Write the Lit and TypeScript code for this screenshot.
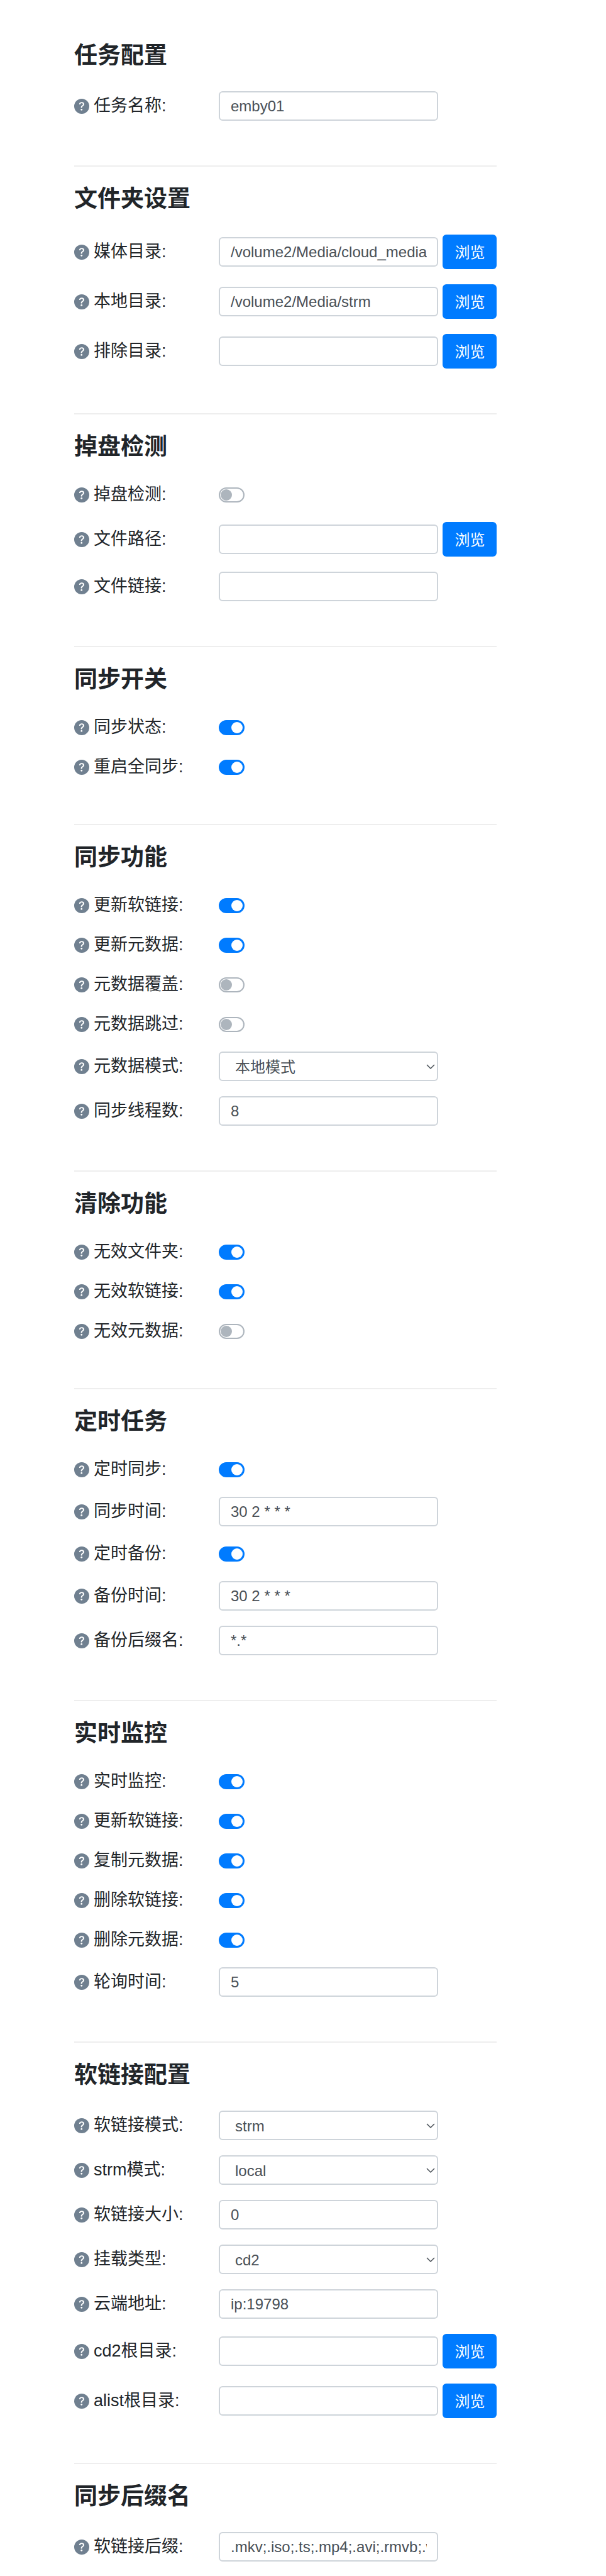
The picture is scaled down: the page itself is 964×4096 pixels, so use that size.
import { LitElement, html, css, nothing } from "lit";
import { customElement, property } from "lit/decorators.js";

type Field = {
  label: string;
  kind: "text" | "browse" | "switch" | "select";
  value?: string;
  on?: boolean;
};

type Section = { title: string; fields: Field[] };

const text = (label: string, value = ""): Field => ({ label, kind: "text", value });
const browse = (label: string, value = ""): Field => ({ label, kind: "browse", value });
const toggle = (label: string, on: boolean): Field => ({ label, kind: "switch", on });
const choice = (label: string, value: string): Field => ({ label, kind: "select", value });

const SECTIONS: Section[] = [
  { title: "任务配置", fields: [text("任务名称", "emby01")] },
  {
    title: "文件夹设置",
    fields: [
      browse("媒体目录", "/volume2/Media/cloud_media"),
      browse("本地目录", "/volume2/Media/strm"),
      browse("排除目录"),
    ],
  },
  {
    title: "掉盘检测",
    fields: [toggle("掉盘检测", false), browse("文件路径"), text("文件链接")],
  },
  {
    title: "同步开关",
    fields: [toggle("同步状态", true), toggle("重启全同步", true)],
  },
  {
    title: "同步功能",
    fields: [
      toggle("更新软链接", true),
      toggle("更新元数据", true),
      toggle("元数据覆盖", false),
      toggle("元数据跳过", false),
      choice("元数据模式", "本地模式"),
      text("同步线程数", "8"),
    ],
  },
  {
    title: "清除功能",
    fields: [
      toggle("无效文件夹", true),
      toggle("无效软链接", true),
      toggle("无效元数据", false),
    ],
  },
  {
    title: "定时任务",
    fields: [
      toggle("定时同步", true),
      text("同步时间", "30 2 * * *"),
      toggle("定时备份", true),
      text("备份时间", "30 2 * * *"),
      text("备份后缀名", "*.*"),
    ],
  },
  {
    title: "实时监控",
    fields: [
      toggle("实时监控", true),
      toggle("更新软链接", true),
      toggle("复制元数据", true),
      toggle("删除软链接", true),
      toggle("删除元数据", true),
      text("轮询时间", "5"),
    ],
  },
  {
    title: "软链接配置",
    fields: [
      choice("软链接模式", "strm"),
      choice("strm模式", "local"),
      text("软链接大小", "0"),
      choice("挂载类型", "cd2"),
      text("云端地址", "ip:19798"),
      browse("cd2根目录"),
      browse("alist根目录"),
    ],
  },
  {
    title: "同步后缀名",
    fields: [text("软链接后缀", ".mkv;.iso;.ts;.mp4;.avi;.rmvb;.wmv")],
  },
];

@customElement("field-row")
class FieldRow extends LitElement {
  @property({ attribute: false }) field!: Field;

  static styles = css`
    :host {
      display: grid;
      grid-template-columns: 230px minmax(0, 1fr) 86px;
      align-items: center;
    }
    .label {
      display: flex;
      align-items: center;
      gap: 7px;
      font-size: 27px;
      line-height: 39px;
      color: #212529;
      white-space: nowrap;
    }
    .help {
      flex: none;
      width: 24px;
      height: 24px;
      fill: #708090;
    }
    .control {
      display: grid;
      padding-right: 7px;
    }
    .box {
      box-sizing: border-box;
      width: 100%;
      height: 47px;
      margin: 0;
      padding: 0 16px 0 17px;
      border: 2px solid #ced4da;
      border-radius: 6px;
      background: #fff;
      color: #495057;
      font: inherit;
      font-size: 24px;
      outline: none;
    }
    .select-wrap {
      display: grid;
      align-items: center;
    }
    .select-wrap > * {
      grid-area: 1 / 1;
    }
    .select {
      appearance: none;
      padding: 2px 32px 0 24px;
    }
    .arrow {
      justify-self: end;
      width: 14px;
      height: 14px;
      margin-right: 5px;
      fill: none;
      stroke: #495057;
      pointer-events: none;
    }
    .switch {
      appearance: none;
      box-sizing: border-box;
      display: flex;
      align-items: center;
      width: 41px;
      height: 24px;
      margin: 0;
      padding: 0 1px;
      border: 2px solid #adb5bd;
      border-radius: 12px;
      background: #fff;
    }
    .switch::before {
      content: "";
      width: 18px;
      height: 18px;
      border-radius: 50%;
      background: #adb5bd;
    }
    .switch:checked {
      justify-content: flex-end;
      border-color: #007bff;
      background: #007bff;
    }
    .switch:checked::before {
      background: #fff;
    }
    .browse {
      height: 55px;
      padding: 0 0 2px;
      border: 0;
      border-radius: 6px;
      background: #007bff;
      color: #fff;
      font: inherit;
      font-size: 24px;
      cursor: pointer;
    }
  `;

  private control(f: Field) {
    if (f.kind === "switch") {
      return html`<input id="c" class="switch" type="checkbox" role="switch" .checked=${!!f.on} />`;
    }
    if (f.kind === "select") {
      return html`<div class="select-wrap">
        <select id="c" class="box select">
          <option selected>${f.value}</option>
        </select>
        <svg class="arrow" viewBox="0 0 14 14" aria-hidden="true">
          <path d="M1 4l6 6 6-6" stroke-width="1.5" />
        </svg>
      </div>`;
    }
    return html`<input id="c" class="box" type="text" .value=${f.value ?? ""} />`;
  }

  render() {
    const f = this.field;
    return html`
      <label class="label" for="c">
        <svg class="help" viewBox="0 0 16 16" aria-hidden="true">
          <path
            d="M16 8A8 8 0 1 1 0 8a8 8 0 0 1 16 0M5.496 6.033h.825c.138 0 .248-.113.266-.25.09-.656.54-1.134 1.342-1.134.686 0 1.314.343 1.314 1.168 0 .635-.374.927-.965 1.371-.673.489-1.206 1.06-1.168 1.987l.003.217a.25.25 0 0 0 .25.246h.811a.25.25 0 0 0 .25-.25v-.105c0-.718.273-.927 1.01-1.486.609-.463 1.244-.977 1.244-2.056 0-1.511-1.276-2.241-2.673-2.241-1.267 0-2.655.59-2.75 2.286a.237.237 0 0 0 .241.247m2.325 6.443c.61 0 1.029-.394 1.029-.927 0-.552-.42-.94-1.029-.94-.584 0-1.009.388-1.009.94 0 .533.425.927 1.01.927z"
          />
        </svg>
        <span>${f.label}:</span>
      </label>
      <div class="control">${this.control(f)}</div>
      ${f.kind === "browse"
        ? html`<button class="browse" type="button">浏览</button>`
        : nothing}
    `;
  }
}

@customElement("app-root")
class AppRoot extends LitElement {
  static styles = css`
    :host {
      display: block;
      background: #fff;
      font-family: "Liberation Sans", "Noto Sans CJK SC", sans-serif;
    }
    .page {
      padding: 67px 18% 20px 118px;
    }
    .section + .section {
      margin-top: 71px;
      padding-top: 30px;
      border-top: 2px solid #eee;
    }
    .title {
      margin: 0 0 34px;
      font-size: 37px;
      line-height: 44px;
      font-weight: 700;
      color: #212529;
    }
    .fields {
      display: flex;
      flex-direction: column;
      gap: 24px;
    }
  `;

  render() {
    return html`<form class="page">
      ${SECTIONS.map(
        (s) => html`<section class="section">
          <h3 class="title">${s.title}</h3>
          <div class="fields">
            ${s.fields.map((f) => html`<field-row .field=${f}></field-row>`)}
          </div>
        </section>`
      )}
    </form>`;
  }
}
